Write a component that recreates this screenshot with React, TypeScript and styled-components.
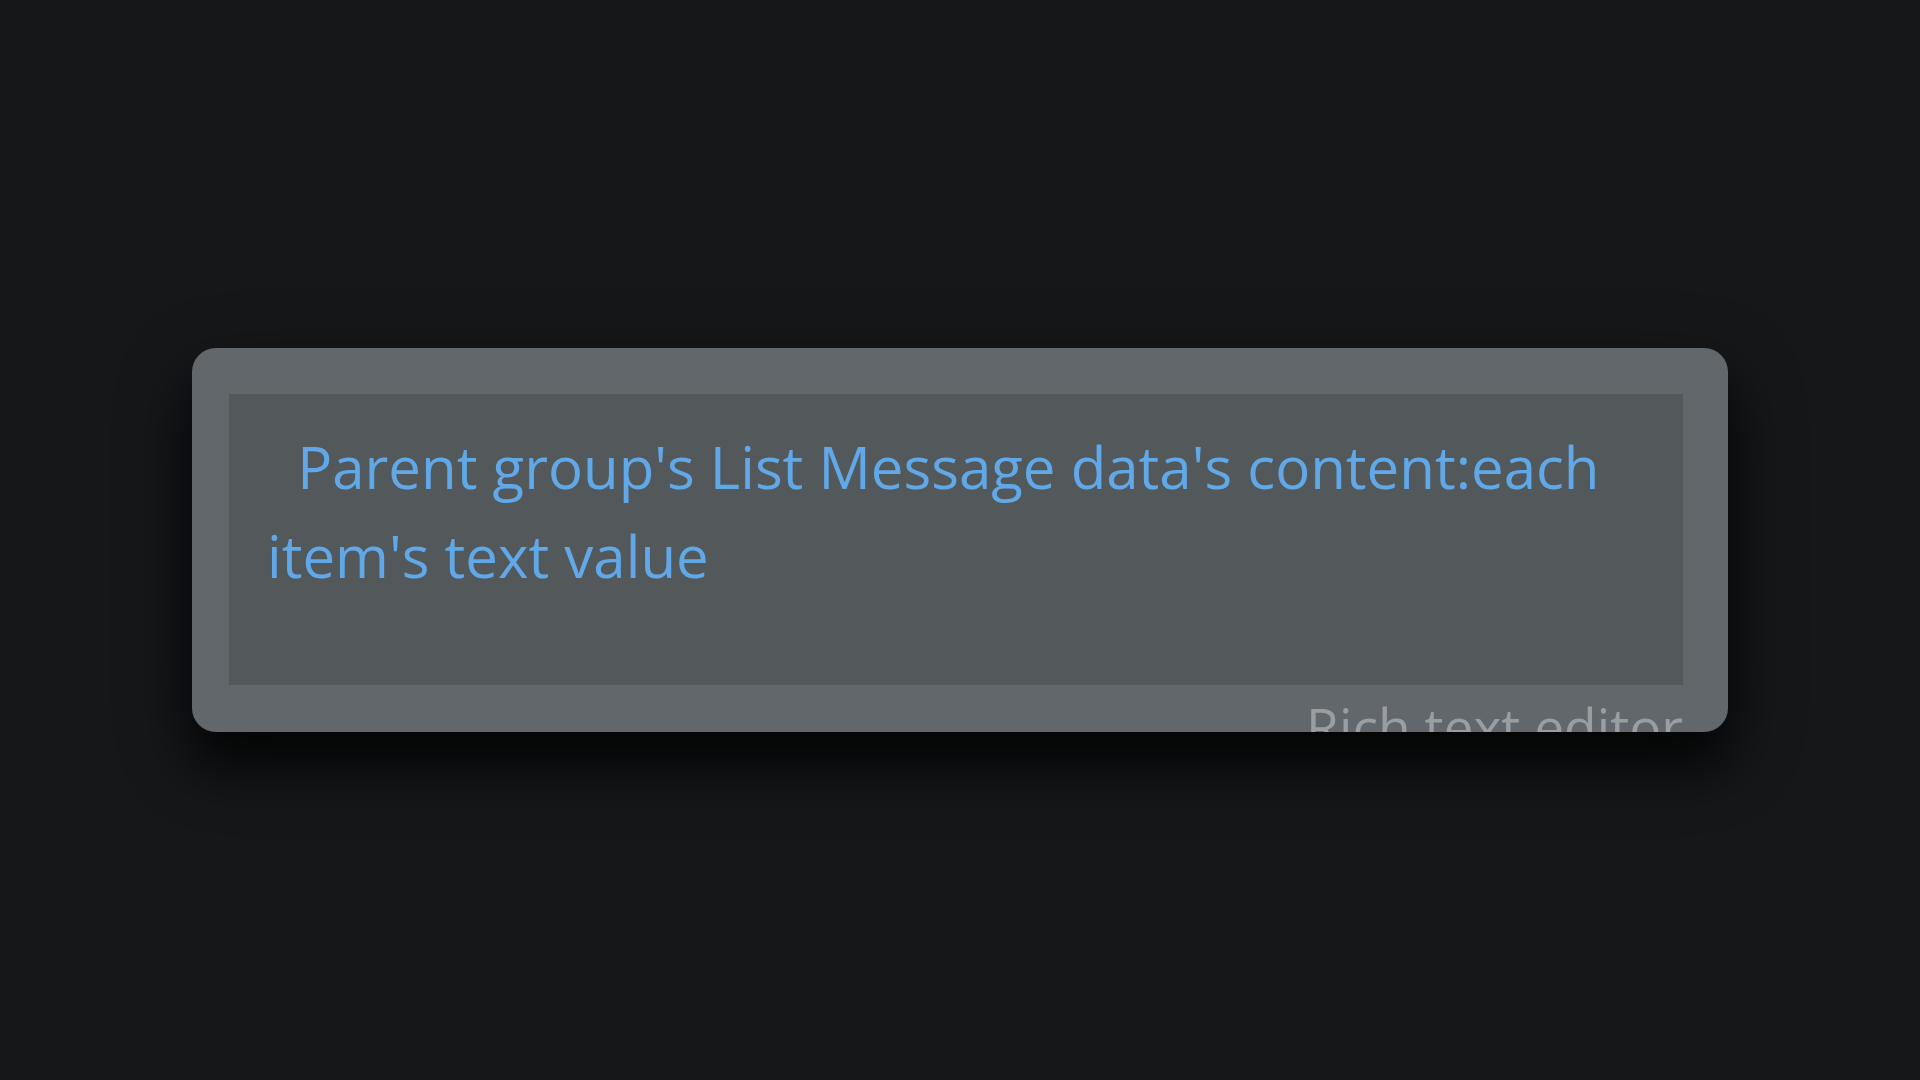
import React from "react";
import styled, { createGlobalStyle } from "styled-components";

const Global = createGlobalStyle`
  html, body {
    margin: 0;
    padding: 0;
    background: #151719;
  }
  body {
    font-family: "Open Sans", "Noto Sans", sans-serif;
  }
`;

const Page = styled.div`
  width: 1920px;
  height: 1080px;
  box-sizing: border-box;
  padding: 348px 192px 0 192px;
  background: #151719;
`;

const Card = styled.div`
  box-sizing: border-box;
  width: 1536px;
  height: 384px;
  padding: 46px 45px 0 37px;
  background: #62676b;
  border-radius: 24px;
  overflow: hidden;
  box-shadow: 0 34px 50px rgba(0, 0, 0, 0.75), 0 24px 80px rgba(0, 0, 0, 0.3);
  display: flex;
  flex-direction: column;
  filter: blur(0.7px);
`;

const Editor = styled.div`
  box-sizing: border-box;
  height: 291px;
  flex-shrink: 0;
  padding: 28px 38px 0 38px;
  background: #53585b;
  font-family: "Open Sans", "Noto Sans", sans-serif;
  font-size: 58.2px;
  line-height: 89px;
  color: #60a8e8;
  white-space: pre-wrap;
`;

const Label = styled.div`
  margin-top: 6px;
  align-self: flex-end;
  font-family: "Open Sans", "Noto Sans", sans-serif;
  font-size: 53.3px;
  line-height: 1.362;
  color: #9a9ea1;
  white-space: nowrap;
`;

export default function App() {
  return (
    <>
      <Global />
      <Page>
        <Card>
          <Editor>{"  Parent group's List Message data's content:each item's text value"}</Editor>
          <Label>Rich text editor</Label>
        </Card>
      </Page>
    </>
  );
}
